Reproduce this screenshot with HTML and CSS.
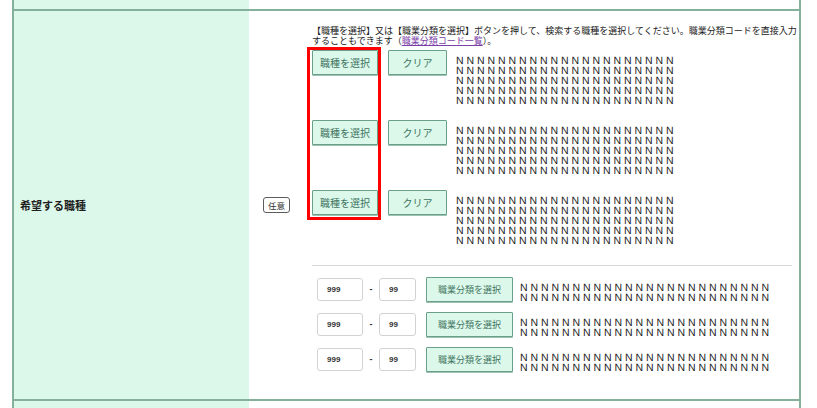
FILE: index.html
```html
<!DOCTYPE html>
<html lang="ja">
<head>
<meta charset="utf-8">
<title>希望する職種</title>
<link rel="stylesheet" href="styles.css">
</head>
<body>
<div class="form">
  <div class="row row-top">
    <div class="label-cell"></div>
    <div class="value-cell"></div>
  </div>
  <div class="row row-main">
    <div class="label-cell"><span class="label">希望する職種</span></div>
    <div class="value-cell">
      <span class="badge">任意</span>
      <div class="content">
        <p class="desc">【職種を選択】又は【職業分類を選択】ボタンを押して、検索する職種を選択してください。職業分類コードを直接入力<br>することもできます（<a class="link" href="#">職業分類コード一覧</a>）。</p>
        <div class="groups">
          <div class="group">
            <button class="btn btn-select" type="button">職種を選択</button>
            <button class="btn btn-clear" type="button">クリア</button>
            <div class="names">N N N N N N N N N N N N N N N N N N N N N<br>N N N N N N N N N N N N N N N N N N N N N<br>N N N N N N N N N N N N N N N N N N N N N<br>N N N N N N N N N N N N N N N N N N N N N<br>N N N N N N N N N N N N N N N N N N N N N</div>
          </div>
          <div class="group">
            <button class="btn btn-select" type="button">職種を選択</button>
            <button class="btn btn-clear" type="button">クリア</button>
            <div class="names">N N N N N N N N N N N N N N N N N N N N N<br>N N N N N N N N N N N N N N N N N N N N N<br>N N N N N N N N N N N N N N N N N N N N N<br>N N N N N N N N N N N N N N N N N N N N N<br>N N N N N N N N N N N N N N N N N N N N N</div>
          </div>
          <div class="group group-last">
            <button class="btn btn-select" type="button">職種を選択</button>
            <button class="btn btn-clear" type="button">クリア</button>
            <div class="names">N N N N N N N N N N N N N N N N N N N N N<br>N N N N N N N N N N N N N N N N N N N N N<br>N N N N N N N N N N N N N N N N N N N N N<br>N N N N N N N N N N N N N N N N N N N N N<br>N N N N N N N N N N N N N N N N N N N N N</div>
          </div>
          <div class="highlight"></div>
        </div>
        <div class="sep"></div>
        <div class="codes">
          <div class="code-row">
            <input class="code code-a" type="text" value="999">
            <span class="dash">-</span>
            <input class="code code-b" type="text" value="99">
            <button class="btn btn-code" type="button">職業分類を選択</button>
            <div class="names names-wide">N N N N N N N N N N N N N N N N N N N N N N N N<br>N N N N N N N N N N N N N N N N N N N N N N N N</div>
          </div>
          <div class="code-row">
            <input class="code code-a" type="text" value="999">
            <span class="dash">-</span>
            <input class="code code-b" type="text" value="99">
            <button class="btn btn-code" type="button">職業分類を選択</button>
            <div class="names names-wide">N N N N N N N N N N N N N N N N N N N N N N N N<br>N N N N N N N N N N N N N N N N N N N N N N N N</div>
          </div>
          <div class="code-row">
            <input class="code code-a" type="text" value="999">
            <span class="dash">-</span>
            <input class="code code-b" type="text" value="99">
            <button class="btn btn-code" type="button">職業分類を選択</button>
            <div class="names names-wide">N N N N N N N N N N N N N N N N N N N N N N N N<br>N N N N N N N N N N N N N N N N N N N N N N N N</div>
          </div>
        </div>
      </div>
    </div>
  </div>
  <div class="row row-bottom">
    <div class="label-cell"></div>
    <div class="value-cell"></div>
  </div>
</div>
</body>
</html>
```
FILE: styles.css
```css
html, body {
  margin: 0;
  padding: 0;
  background: #ffffff;
}
body {
  font-family: "Noto Sans CJK JP", "Liberation Sans", sans-serif;
  color: #222222;
}
.form {
  margin-left: 12px;
  width: 789px;
  box-sizing: border-box;
  border-left: 2px solid #85b19c;
  border-right: 2px solid #85b19c;
}
.row {
  display: flex;
}
.row + .row {
  border-top: 2px solid #85b19c;
}
.row-top {
  height: 9px;
}
.row-bottom {
  height: 7px;
}
.label-cell {
  flex: none;
  width: 235px;
  background: #dcf8ea;
  display: flex;
  align-items: center;
}
.value-cell {
  flex: 1;
  display: flex;
  align-items: center;
}
.row-main .value-cell {
  padding-left: 14px;
}
.label {
  padding-left: 6px;
  font-size: 11px;
  font-weight: bold;
  color: #1e1e1e;
}
.badge {
  flex: none;
  width: 27px;
  height: 16px;
  box-sizing: border-box;
  border: 1px solid #5c5c5c;
  border-radius: 3px;
  font-size: 8.5px;
  line-height: 14px;
  text-align: center;
  color: #333333;
  margin-right: 22px;
}
.content {
  width: 480px;
  padding: 15px 0 27px;
}
.desc {
  margin: 0;
  font-size: 9px;
  line-height: 10px;
  white-space: nowrap;
  color: #222222;
}
.link {
  color: #7a3ea8;
  text-decoration: underline;
}
.groups {
  position: relative;
  margin-top: 4px;
}
.group {
  display: flex;
  align-items: flex-start;
  height: 70px;
}
.group-last {
  height: 56px;
}
.btn {
  flex: none;
  box-sizing: border-box;
  height: 25px;
  padding: 0;
  margin: 0;
  background: #dcf8ea;
  border: 1px solid #6a9f89;
  border-radius: 1px;
  box-shadow: 0 1px 0 #9fc2b3;
  color: #3e7461;
  font-family: "Noto Sans CJK JP", sans-serif;
  font-size: 10px;
  line-height: 23px;
  text-align: center;
}
.btn-select {
  width: 66px;
}
.btn-clear {
  width: 59px;
  margin-left: 10px;
}
.names {
  flex: none;
  margin-left: 9px;
  padding-top: 6px;
  white-space: nowrap;
  font-family: "Liberation Sans", Arial, sans-serif;
  font-size: 10.5px;
  line-height: 10px;
  text-rendering: geometricPrecision;
  color: #1a1a1a;
}
.highlight {
  position: absolute;
  left: -5px;
  top: -3px;
  width: 74px;
  height: 173px;
  box-sizing: border-box;
  border: 3px solid #ff0000;
  pointer-events: none;
}
.sep {
  margin-top: 19px;
  border-top: 1px solid #d6d6d6;
}
.codes {
  margin-top: 11px;
}
.code-row {
  display: flex;
  align-items: flex-start;
  height: 25px;
  padding-left: 5px;
}
.code-row + .code-row {
  margin-top: 10px;
}
.code {
  flex: none;
  box-sizing: border-box;
  height: 23px;
  margin: 1px 0 0;
  padding: 0 0 0 9px;
  border: 1px solid #d2d2d2;
  border-radius: 3px;
  background: #ffffff;
  font-family: "Liberation Sans", Arial, sans-serif;
  font-size: 8px;
  font-weight: bold;
  color: #333333;
  outline: none;
}
.code-a {
  width: 46px;
}
.code-b {
  width: 37px;
}
.dash {
  flex: none;
  width: 16px;
  text-align: center;
  font-family: "Liberation Sans", Arial, sans-serif;
  font-size: 9px;
  font-weight: bold;
  line-height: 24px;
  color: #333333;
}
.btn-code {
  width: 87px;
  margin-left: 10px;
  font-size: 9px;
}
.names-wide {
  margin-left: 7px;
}
```
